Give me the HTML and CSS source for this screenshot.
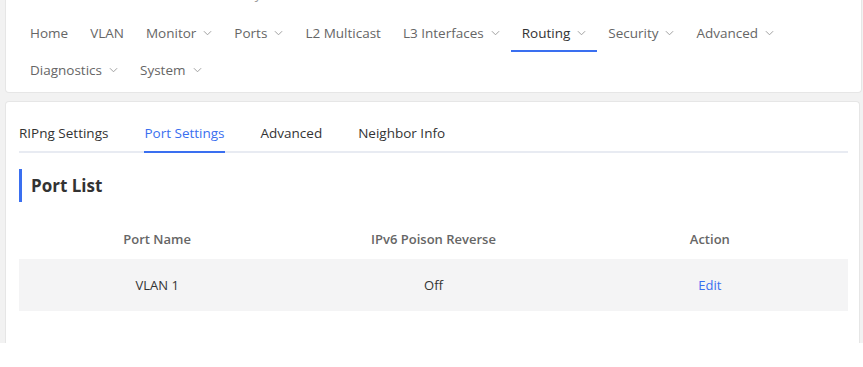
FILE: index.html
```
<!DOCTYPE html>
<html lang="en">
<head>
    <meta charset="UTF-8">
    <meta name="viewport" content="width=device-width, initial-scale=1.0">
    <title>RIPng Port Settings</title>
    <link rel="stylesheet" href="styles.css">
</head>
<body>
    <div class="page">
        <div class="card top-card">
            <div class="info-row">
                <span class="info-sw">Software Ver: ReyeeOS 1.0</span>
                <span class="info-hw">Hardware Ver: 1.00</span>
                <span class="info-sn">SN: G1</span>
            </div>
            <nav class="menu">
                <a class="menu-item">Home</a>
                <a class="menu-item">VLAN</a>
                <a class="menu-item">Monitor <svg class="chev" viewBox="0 0 10 6"><polyline points="1,1 5,5 9,1"/></svg></a>
                <a class="menu-item">Ports <svg class="chev" viewBox="0 0 10 6"><polyline points="1,1 5,5 9,1"/></svg></a>
                <a class="menu-item">L2 Multicast</a>
                <a class="menu-item">L3 Interfaces <svg class="chev" viewBox="0 0 10 6"><polyline points="1,1 5,5 9,1"/></svg></a>
                <a class="menu-item active">Routing <svg class="chev" viewBox="0 0 10 6"><polyline points="1,1 5,5 9,1"/></svg></a>
                <a class="menu-item">Security <svg class="chev" viewBox="0 0 10 6"><polyline points="1,1 5,5 9,1"/></svg></a>
                <a class="menu-item">Advanced <svg class="chev" viewBox="0 0 10 6"><polyline points="1,1 5,5 9,1"/></svg></a>
                <a class="menu-item">Diagnostics <svg class="chev" viewBox="0 0 10 6"><polyline points="1,1 5,5 9,1"/></svg></a>
                <a class="menu-item">System <svg class="chev" viewBox="0 0 10 6"><polyline points="1,1 5,5 9,1"/></svg></a>
            </nav>
        </div>

        <div class="card main-card">
            <div class="tabs">
                <a class="tab">RIPng Settings</a>
                <a class="tab active">Port Settings</a>
                <a class="tab">Advanced</a>
                <a class="tab">Neighbor Info</a>
            </div>

            <h2 class="section-title">Port List</h2>

            <table class="port-table">
                <thead>
                    <tr>
                        <th>Port Name</th>
                        <th>IPv6 Poison Reverse</th>
                        <th>Action</th>
                    </tr>
                </thead>
                <tbody>
                    <tr>
                        <td>VLAN 1</td>
                        <td>Off</td>
                        <td><a class="link">Edit</a></td>
                    </tr>
                </tbody>
            </table>
        </div>
    </div>
</body>
</html>
```

FILE: styles.css
```
body {
    margin: 0;
    background-color: #ffffff;
    font-family: 'Open Sans', 'Noto Sans', sans-serif;
    color: #333333;
}
.page {
    background-color: #f2f2f2;
    height: 356px;
    margin-top: -13px;
    padding: 0 1px 0 5px;
    display: flex;
    flex-direction: column;
    gap: 8px;
    box-sizing: border-box;
}
.card {
    background-color: #ffffff;
    border: 1px solid #e6e6e6;
    border-radius: 4px;
}
.top-card {
    border-top: none;
    border-radius: 0 0 4px 4px;
    padding: 0 13px 3px;
}
.info-row {
    display: flex;
    height: 20px;
    line-height: 20px;
    font-size: 13px;
    color: #999999;
    margin: -3px 0 11px;
}
.info-sw {
    margin-left: 136px;
}
.info-hw {
    margin-left: 100px;
}
.info-sn {
    margin-left: 100px;
}
.menu {
    display: flex;
    flex-wrap: wrap;
}
.menu-item {
    display: flex;
    align-items: center;
    height: 37px;
    padding: 1px 11px 0;
    font-size: 13.5px;
    color: #666666;
    box-sizing: border-box;
    border-bottom: 2px solid transparent;
}
.menu-item.active {
    color: #333333;
    border-bottom-color: #3a6ff0;
}
.chev {
    width: 9px;
    height: 6px;
    margin-left: 7px;
    fill: none;
    stroke: #a0a0a0;
    stroke-width: 1.1;
}
.main-card {
    flex: 1;
    margin-right: 2px;
    padding: 0 11px 0 13px;
    border-bottom: none;
    border-radius: 4px 4px 0 0;
}
.tabs {
    display: flex;
    gap: 36px;
    margin-top: 19px;
    border-bottom: 2px solid #e8ebf2;
}
.tab {
    font-size: 13.5px;
    line-height: 24px;
    padding-bottom: 6px;
    margin-bottom: -2px;
    border-bottom: 2px solid transparent;
    color: #333333;
}
.tab.active {
    color: #3a6ff0;
    border-bottom-color: #3a6ff0;
}
.section-title {
    margin: 16px 0 0;
    padding-left: 9px;
    border-left: 3px solid #3a6ff0;
    font-size: 17px;
    font-weight: 700;
    line-height: 33px;
    color: #333333;
}
.port-table {
    width: 100%;
    margin-top: 16px;
    border-collapse: collapse;
    table-layout: fixed;
    font-size: 13px;
}
.port-table th {
    height: 41px;
    padding: 0;
    font-weight: 600;
    color: #666666;
    text-align: center;
}
.port-table td {
    height: 52px;
    padding: 0;
    text-align: center;
    background-color: #f4f4f5;
    color: #333333;
}
.link {
    color: #3a6ff0;
    cursor: pointer;
}
```
